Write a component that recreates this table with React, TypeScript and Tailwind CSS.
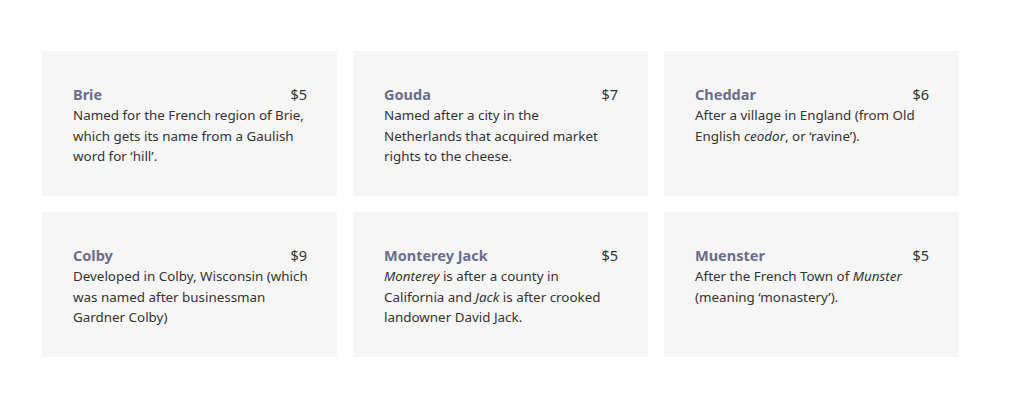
const cheeses = [
  {
    name: "Brie",
    price: "$5",
    body: <>Named for the French region of Brie, which gets its name from a Gaulish word for ‘hill’.</>,
  },
  {
    name: "Gouda",
    price: "$7",
    body: <>Named after a city in the Netherlands that acquired market rights to the cheese.</>,
  },
  {
    name: "Cheddar",
    price: "$6",
    body: (
      <>
        After a village in England (from Old English <em>ceodor</em>, or ‘ravine’).
      </>
    ),
  },
  {
    name: "Colby",
    price: "$9",
    body: <>Developed in Colby, Wisconsin (which was named after businessman Gardner Colby)</>,
  },
  {
    name: "Monterey Jack",
    price: "$5",
    body: (
      <>
        <em>Monterey</em> is after a county in California and <em>Jack</em> is after crooked landowner David Jack.
      </>
    ),
  },
  {
    name: "Muenster",
    price: "$5",
    body: (
      <>
        After the French Town of <em>Munster</em> (meaning ‘monastery’).
      </>
    ),
  },
];

export default function App() {
  return (
    <div className="w-[1024px] h-[408px] bg-white pt-[51px] pl-[42px] font-['Noto_Sans','Open_Sans',sans-serif]">
      <div className="grid grid-cols-[295px_295px_295px] gap-x-[16px] gap-y-[16px]">
        {cheeses.map((c) => (
          <div key={c.name} className="h-[145px] bg-[#f6f6f6] pl-[31px] pr-[29px] pt-[33px]">
            <div className="flex items-baseline justify-between leading-[20px] pr-[1px]">
              <span className="text-[14.5px] font-bold text-[#6b6d8a]">{c.name}</span>
              <span className="text-[14.5px] text-[#333]">{c.price}</span>
            </div>
            <p className="mt-[1px] text-[13.4px] leading-[20.5px] text-[#333]">{c.body}</p>
          </div>
        ))}
      </div>
    </div>
  );
}
